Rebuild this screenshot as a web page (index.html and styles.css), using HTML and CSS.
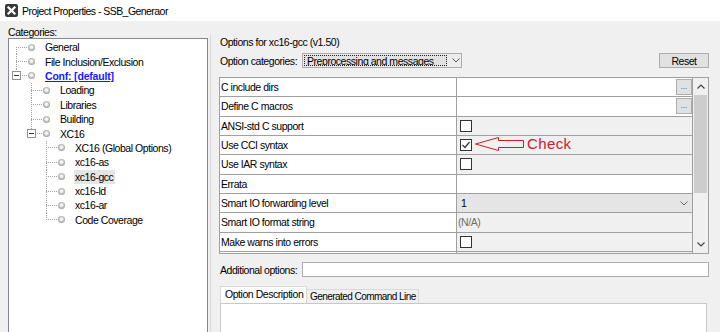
FILE: index.html
```html
<!DOCTYPE html>
<html lang="en">
<head>
    <meta charset="UTF-8">
    <title>Project Properties - SSB_Generaor</title>
    <link rel="stylesheet" href="styles.css">
</head>
<body>
    <div class="titlebar">
        <svg class="app-icon" viewBox="0 0 13 13">
            <rect x="0" y="0" width="13" height="13" rx="2" fill="#3a3a3a"/>
            <path d="M3.5 3.5 L9.5 9.5 M9.5 3.5 L3.5 9.5" stroke="#fff" stroke-width="2.2" stroke-linecap="square"/>
        </svg>
        <span class="title">Project Properties - SSB_Generaor</span>
    </div>

    <div class="main">
        <div class="left">
            <div class="cat-label">Categories:</div>
            <div class="tree">
                <div class="node l0"><span class="conn first"></span><span class="bullet"></span><span class="txt">General</span></div>
                <div class="node l0"><span class="conn"></span><span class="bullet"></span><span class="txt">File Inclusion/Exclusion</span></div>
                <div class="node l0"><span class="conn last"><span class="exp"></span></span><span class="bullet"></span><span class="txt conf">Conf: [default]</span></div>
                <div class="node l1"><span class="conn"></span><span class="bullet"></span><span class="txt">Loading</span></div>
                <div class="node l1"><span class="conn"></span><span class="bullet"></span><span class="txt">Libraries</span></div>
                <div class="node l1"><span class="conn"></span><span class="bullet"></span><span class="txt">Building</span></div>
                <div class="node l1"><span class="conn last"><span class="exp"></span></span><span class="bullet"></span><span class="txt">XC16</span></div>
                <div class="node l2"><span class="conn"></span><span class="bullet"></span><span class="txt">XC16 (Global Options)</span></div>
                <div class="node l2"><span class="conn"></span><span class="bullet"></span><span class="txt">xc16-as</span></div>
                <div class="node l2"><span class="conn"></span><span class="bullet"></span><span class="txt selected">xc16-gcc</span></div>
                <div class="node l2"><span class="conn"></span><span class="bullet"></span><span class="txt">xc16-ld</span></div>
                <div class="node l2"><span class="conn"></span><span class="bullet"></span><span class="txt">xc16-ar</span></div>
                <div class="node l2"><span class="conn last"></span><span class="bullet"></span><span class="txt">Code Coverage</span></div>
            </div>
        </div>

        <div class="splitter"></div>

        <div class="right">
            <div class="opt-title">Options for xc16-gcc (v1.50)</div>

            <div class="cat-row">
                <span class="field-label">Option categories:</span>
                <div class="combo">
                    <span class="combo-sel">Preprocessing and messages</span>
                    <svg class="chev" viewBox="0 0 8 5"><path d="M0.5 0.5 L4 4 L7.5 0.5" fill="none" stroke="#555" stroke-width="1"/></svg>
                </div>
                <button class="btn">Reset</button>
            </div>

            <div class="grid">
                <div class="rows">
                    <div class="row">
                        <div class="name">C include dirs</div>
                        <div class="val white"><span class="field"></span><span class="dots">...</span></div>
                    </div>
                    <div class="row">
                        <div class="name">Define C macros</div>
                        <div class="val white"><span class="field"></span><span class="dots">...</span></div>
                    </div>
                    <div class="row">
                        <div class="name">ANSI-std C support</div>
                        <div class="val"><span class="chk"></span></div>
                    </div>
                    <div class="row">
                        <div class="name">Use CCI syntax</div>
                        <div class="val callout-cell">
                            <span class="chk"><svg viewBox="0 0 10 10"><path d="M1.5 5 L4 7.5 L8.5 2" fill="none" stroke="#333" stroke-width="1.2"/></svg></span>
                            <div class="callout">
                                <svg class="arrow" viewBox="0 0 49 14"><polygon points="0.5,7 23.5,0.5 23.5,3.5 48.5,3.5 48.5,10.5 23.5,10.5 23.5,13.5" fill="none" stroke="#c8202a" stroke-width="1"/></svg>
                                <span class="callout-text">Check</span>
                            </div>
                        </div>
                    </div>
                    <div class="row">
                        <div class="name">Use IAR syntax</div>
                        <div class="val"><span class="chk"></span></div>
                    </div>
                    <div class="row">
                        <div class="name">Errata</div>
                        <div class="val white"></div>
                    </div>
                    <div class="row">
                        <div class="name">Smart IO forwarding level</div>
                        <div class="val select">
                            <span>1</span>
                            <svg class="chev" viewBox="0 0 8 5"><path d="M0.5 0.5 L4 4 L7.5 0.5" fill="none" stroke="#666" stroke-width="1"/></svg>
                        </div>
                    </div>
                    <div class="row">
                        <div class="name">Smart IO format string</div>
                        <div class="val na">(N/A)</div>
                    </div>
                    <div class="row">
                        <div class="name">Make warns into errors</div>
                        <div class="val"><span class="chk"></span></div>
                    </div>
                    <div class="row">
                        <div class="name"></div>
                        <div class="val"></div>
                    </div>
                </div>
                <div class="vscroll">
                    <div class="sb-btn"><svg viewBox="0 0 8 5"><path d="M0.5 4.5 L4 1 L7.5 4.5" fill="none" stroke="#444" stroke-width="1.2"/></svg></div>
                    <div class="sb-thumb"></div>
                    <div class="sb-track"></div>
                    <div class="sb-btn"><svg viewBox="0 0 8 5"><path d="M0.5 0.5 L4 4 L7.5 0.5" fill="none" stroke="#444" stroke-width="1.2"/></svg></div>
                </div>
            </div>

            <div class="addl">
                <span class="field-label">Additional options:</span>
                <div class="input"></div>
            </div>

            <div class="tabs">
                <div class="tab active">Option Description</div>
                <div class="tab">Generated Command Line</div>
            </div>
            <div class="tab-panel"></div>
        </div>
    </div>
</body>
</html>
```

FILE: styles.css
```css
* {
    margin: 0;
    padding: 0;
    box-sizing: border-box;
}

:root {
    --dot-h: repeating-linear-gradient(to right, #a0a0a0 0 1px, transparent 1px 2px);
    --dot-v: repeating-linear-gradient(to bottom, #a0a0a0 0 1px, transparent 1px 2px);
}

body {
    width: 720px;
    height: 332px;
    overflow: hidden;
    background: #f0f0f0;
    font-family: "Liberation Sans", Arial, sans-serif;
    font-size: 10.5px;
    letter-spacing: -0.45px;
    color: #000;
}

/* title bar */
.titlebar {
    height: 21px;
    background: #fff;
    display: flex;
    align-items: center;
    padding-left: 5px;
    gap: 4px;
}

.app-icon {
    width: 13px;
    height: 13px;
}

.title {
    font-size: 10.5px;
    letter-spacing: -0.55px;
}

.main {
    display: flex;
    height: 311px;
}

/* categories tree */
.left {
    width: 210px;
    padding: 5px 0 0 8px;
    display: flex;
    flex-direction: column;
}

.cat-label {
    height: 12px;
    line-height: 12px;
}

.tree {
    width: 200px;
    flex: 1;
    background: #fff;
    border: 1px solid #828790;
    border-bottom: none;
    padding-top: 1px;
}

.node {
    display: flex;
    align-items: center;
    height: 14.4px;
    white-space: nowrap;
    padding-left: 7px;
}

.node.l1 { padding-left: 22px; }
.node.l2 { padding-left: 37px; }

.conn {
    width: 12px;
    height: 100%;
    display: flex;
    align-items: center;
    background: var(--dot-h) left 50% / 100% 1px no-repeat,
                var(--dot-v) left top / 1px 100% no-repeat;
}

.conn.first {
    background: var(--dot-h) left 50% / 100% 1px no-repeat,
                var(--dot-v) left bottom / 1px 50% no-repeat;
}

.conn.last {
    background: var(--dot-h) left 50% / 100% 1px no-repeat,
                var(--dot-v) left top / 1px 50% no-repeat;
}

.exp {
    width: 9px;
    height: 9px;
    margin-left: -4px;
    border: 1px solid #919191;
    background: #fff;
    display: flex;
    align-items: center;
    justify-content: center;
}

.exp::before {
    content: '';
    width: 5px;
    height: 1px;
    background: #333;
}

.bullet {
    width: 7px;
    height: 7px;
    border-radius: 50%;
    background: radial-gradient(circle at 50% 45%, #f4f4f4 0 1.2px, #cfcfcf 2px, #a6a6a6 3.5px);
}

.txt {
    margin-left: 10px;
}

.conf {
    color: #1a1aff;
    font-weight: bold;
    text-decoration: underline;
    letter-spacing: -0.2px;
}

.txt.selected {
    background: #e5e5e5;
    padding: 1px 2px 1px 1px;
    margin-left: 9px;
}

.splitter {
    width: 1px;
    margin-top: 14px;
    background: #d9d9d9;
}

/* options panel */
.right {
    flex: 1;
    padding: 14px 11px 0 8px;
    display: flex;
    flex-direction: column;
}

.opt-title {
    height: 14px;
    line-height: 14px;
    padding-left: 1px;
}

.cat-row {
    display: flex;
    align-items: center;
    margin-top: 4px;
    height: 15px;
}

.field-label {
    width: 83px;
    padding-left: 1px;
    white-space: nowrap;
}

.combo {
    width: 160px;
    height: 15px;
    border: 1px solid #acacac;
    background: #ececec;
    display: flex;
    align-items: center;
    padding: 1px;
}

.combo-sel {
    width: 143px;
    height: 100%;
    border: 1px dotted #222;
    background: #e2e2e2;
    line-height: 10px;
    padding-left: 2px;
    white-space: nowrap;
    overflow: hidden;
}

.chev {
    width: 8px;
    height: 5px;
}

.combo .chev {
    margin-left: 5px;
}

.btn {
    margin-left: auto;
    width: 50px;
    height: 15px;
    border: 1px solid #adadad;
    background: #e1e1e1;
    font: inherit;
    letter-spacing: inherit;
    line-height: 12px;
}

/* property grid */
.grid {
    margin-top: 9px;
    height: 177px;
    border: 1px solid #a0a0a0;
    display: flex;
    background: #fff;
}

.rows {
    flex: 1;
    overflow: hidden;
}

.row {
    display: flex;
    height: 19.33px;
    border-bottom: 1px solid #a0a0a0;
}

.name {
    width: 237px;
    border-right: 1px solid #a0a0a0;
    padding-left: 1px;
    display: flex;
    align-items: center;
    background: #fff;
    white-space: nowrap;
}

.val {
    flex: 1;
    border-right: 1px solid #a0a0a0;
    display: flex;
    align-items: center;
    background: #f0f0f0;
    padding-left: 3px;
}

.val.white {
    background: #fff;
    padding-left: 0;
}

.field {
    flex: 1;
}

.dots {
    width: 16px;
    height: 16px;
    border: 1px solid #adadad;
    background: #e1e1e1;
    font-size: 8px;
    letter-spacing: 0;
    line-height: 14px;
    text-align: center;
    color: #444;
}

.val.select {
    background: #e5e5e5;
    justify-content: space-between;
    padding: 0 4px 0 4px;
}

.val.na {
    color: #6d6d6d;
    padding-left: 1px;
}

.chk {
    width: 12px;
    height: 12px;
    border: 1px solid #333;
    background: #fff;
    display: flex;
}

.chk svg {
    width: 10px;
    height: 10px;
}

.callout-cell {
    position: relative;
}

.callout {
    position: absolute;
    left: 18px;
    top: 1px;
    display: flex;
    align-items: center;
    gap: 3px;
}

.arrow {
    width: 49px;
    height: 14px;
}

.callout-text {
    font-size: 15px;
    letter-spacing: 0.4px;
    color: #c8202a;
    line-height: 14px;
}

.vscroll {
    width: 15px;
    display: flex;
    flex-direction: column;
    background: #f0f0f0;
}

.sb-btn {
    height: 17px;
    display: flex;
    align-items: center;
    justify-content: center;
}

.sb-btn svg {
    width: 8px;
    height: 5px;
}

.sb-thumb {
    height: 98px;
    margin: 0 1px;
    background: #cdcdcd;
}

.sb-track {
    flex: 1;
}

/* additional options + tabs */
.addl {
    display: flex;
    align-items: center;
    margin-top: 8px;
    height: 15px;
}

.addl .input {
    flex: 1;
    height: 15px;
    background: #fff;
    border: 1px solid #abadb3;
}

.tabs {
    display: flex;
    align-items: flex-end;
    margin-top: 9px;
    padding-left: 1px;
    height: 17px;
}

.tab {
    height: 14px;
    line-height: 13px;
    padding: 0 2px 0 3px;
    border: 1px solid #d9d9d9;
    border-bottom: none;
    border-left: none;
    white-space: nowrap;
    font-size: 10px;
    letter-spacing: -0.55px;
}

.tab.active {
    height: 17px;
    line-height: 15px;
    width: 87px;
    padding-left: 4px;
    background: #fff;
    border-left: 1px solid #d9d9d9;
    font-size: 10.5px;
    letter-spacing: -0.45px;
}

.tab-panel {
    flex: 1;
    margin: 0 2px 0 1px;
    background: #fff;
    border: 1px solid #c8c8c8;
    border-bottom: none;
}
```
